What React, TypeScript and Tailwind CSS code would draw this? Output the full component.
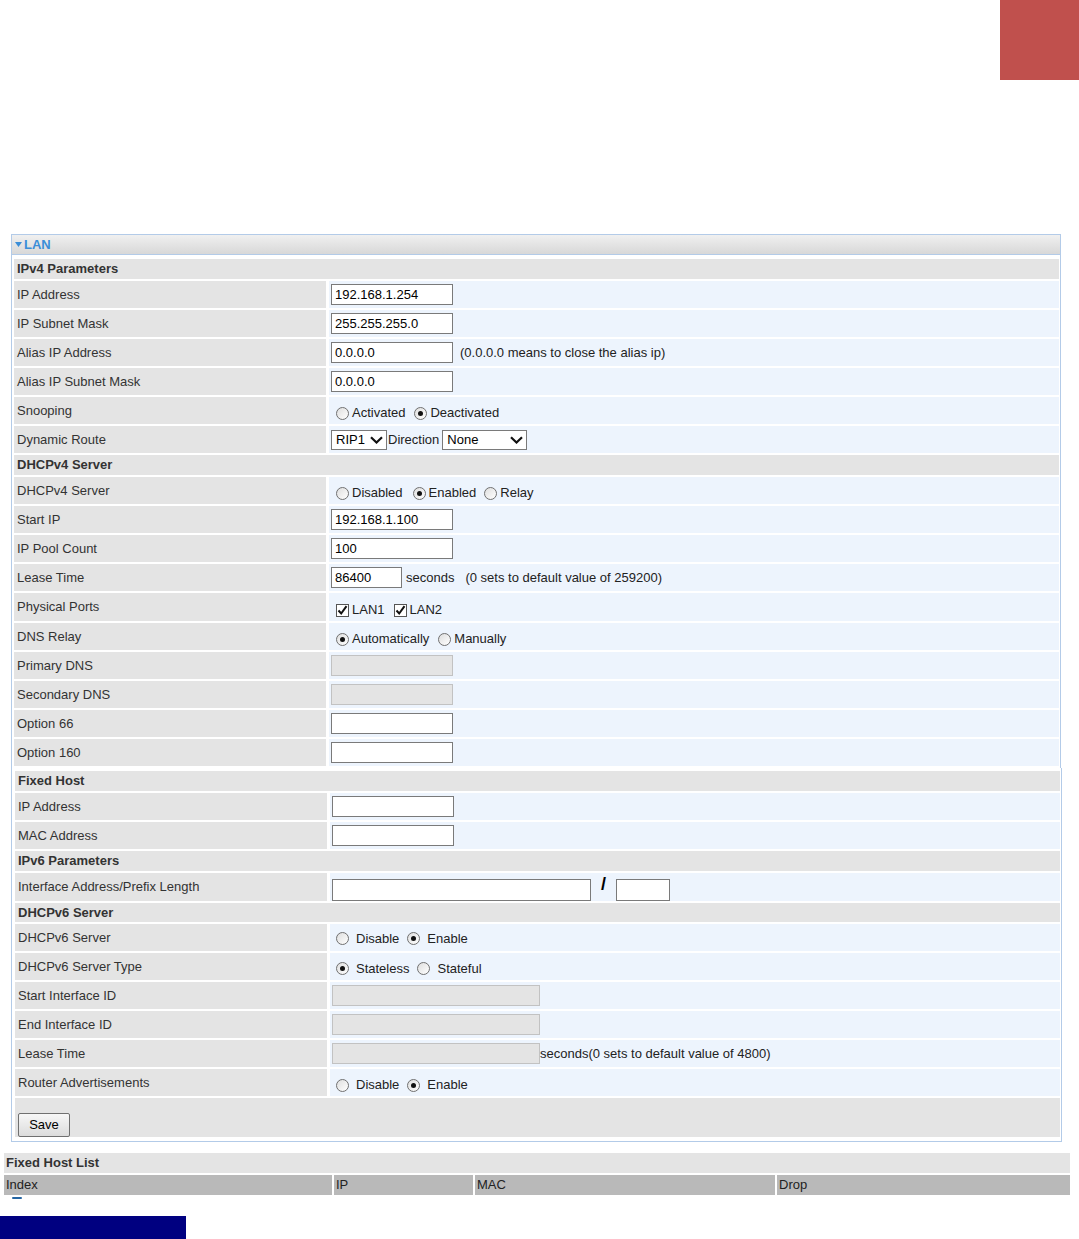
import type { ReactNode } from "react";

const border = "border-[#b3cbe8]";

function Radio({ checked }: { checked?: boolean }) {
  return (
    <span className="inline-flex h-[13px] w-[13px] shrink-0 items-center justify-center rounded-full border border-[#707070] bg-linear-to-br from-[#dedede] to-white">
      {checked && <span className="h-[5px] w-[5px] rounded-full bg-[#111]" />}
    </span>
  );
}

function Option({
  checked,
  label,
  className,
  gap = "ml-[3px]",
}: {
  checked?: boolean;
  label: string;
  className: string;
  gap?: string;
}) {
  return (
    <span className={"inline-flex items-center " + className}>
      <Radio checked={checked} />
      <span className={gap}>{label}</span>
    </span>
  );
}

function Check({ label, className }: { label: string; className: string }) {
  return (
    <span className={"inline-flex items-center " + className}>
      <svg width="13" height="13" viewBox="0 0 13 13" className="shrink-0">
        <rect x="0.5" y="0.5" width="12" height="12" fill="#fff" stroke="#555" />
        <path d="M2.5 6.5 L5.2 9.5 L10.5 2.2" fill="none" stroke="#111" strokeWidth="2" />
      </svg>
      <span className="ml-[3px]">{label}</span>
    </span>
  );
}

function Field({
  value = "",
  className = "w-[122px] h-[21px]",
  disabled,
}: {
  value?: string;
  className?: string;
  disabled?: boolean;
}) {
  return (
    <input
      type="text"
      readOnly
      disabled={disabled}
      defaultValue={value}
      className={
        className +
        " border px-[3px] text-[13px] text-black outline-none " +
        (disabled ? "border-[#c2c2c2] bg-[#e4e4e4]" : "border-[#7a7a7a] bg-white")
      }
    />
  );
}

function Select({ value, className }: { value: string; className: string }) {
  return (
    <span
      className={
        "flex h-[20px] items-center justify-between border border-[#7a7a7a] bg-white pl-[4px] pr-[3px] text-black " +
        className
      }
    >
      {value}
      <svg width="13" height="8" viewBox="0 0 13 8">
        <path d="M1 1.2 L6.5 6.5 L12 1.2" fill="none" stroke="#111" strokeWidth="2.2" />
      </svg>
    </span>
  );
}

function Header({ children, h = "h-[20px]" }: { children: ReactNode; h?: string }) {
  return (
    <div className={"col-span-2 flex items-center bg-[#e4e4e4] pl-[3px] font-bold text-[#333] " + h}>
      {children}
    </div>
  );
}

function Row({
  label,
  children,
  h = "h-[27px]",
  align = "items-center",
}: {
  label: string;
  children?: ReactNode;
  h?: string;
  align?: string;
}) {
  return (
    <>
      <div className={"flex items-center bg-[#e4e4e4] pl-[3px] text-[#333] " + h}>{label}</div>
      <div className={"flex bg-[#edf4fd] pl-[2px] text-[#222] " + align + " " + h}>{children}</div>
    </>
  );
}

export default function App() {
  return (
    <div className="h-[1239px] overflow-hidden bg-white font-['Liberation_Sans',Arial,sans-serif] text-[13px]">
      <div className="flex h-[234px] justify-end">
        <div className="h-[80px] w-[79px] bg-[#c0504d]" />
      </div>

      <div className={"ml-[11px] w-[1051px] border-b border-l " + border}>
        <div
          className={
            "flex h-[21px] w-[1049px] items-center border-t border-r border-b bg-linear-to-b from-[#f0f0f0] to-[#d8d8d8] pl-[3px] " +
            border
          }
        >
          <svg width="7" height="5" viewBox="0 0 7 5">
            <path d="M0 0 H7 L3.5 5 Z" fill="#3b8ed8" />
          </svg>
          <span className="ml-[2px] font-bold text-[#3b8ed8]">LAN</span>
        </div>

        <div className={"w-[1049px] border-r pt-[4px] pb-[2px] pl-[2px] " + border}>
          <div className="grid grid-cols-[312px_730px] gap-x-[3px] gap-y-[2px]">
            <Header>IPv4 Parameters</Header>
            <Row label="IP Address">
              <Field value="192.168.1.254" />
            </Row>
            <Row label="IP Subnet Mask">
              <Field value="255.255.255.0" />
            </Row>
            <Row label="Alias IP Address">
              <Field value="0.0.0.0" />
              <span className="ml-[7px]">(0.0.0.0 means to close the alias ip)</span>
            </Row>
            <Row label="Alias IP Subnet Mask">
              <Field value="0.0.0.0" />
            </Row>
            <Row label="Snooping" align="items-center pt-[5px]">
              <Option label="Activated" className="ml-[5px]" />
              <Option label="Deactivated" checked className="ml-[9px]" />
            </Row>
            <Row label="Dynamic Route">
              <Select value="RIP1" className="w-[56px]" />
              <span className="ml-[1px]">Direction</span>
              <Select value="None" className="ml-[3px] w-[85px]" />
            </Row>
            <Header>DHCPv4 Server</Header>
            <Row label="DHCPv4 Server" align="items-center pt-[5px]">
              <Option label="Disabled" className="ml-[5px]" />
              <Option label="Enabled" checked className="ml-[10px]" />
              <Option label="Relay" className="ml-[8px]" />
            </Row>
            <Row label="Start IP">
              <Field value="192.168.1.100" />
            </Row>
            <Row label="IP Pool Count">
              <Field value="100" />
            </Row>
            <Row label="Lease Time">
              <Field value="86400" className="h-[21px] w-[71px]" />
              <span className="ml-[4px]">seconds</span>
              <span className="ml-[11px]">(0 sets to default value of 259200)</span>
            </Row>
            <Row label="Physical Ports" h="h-[28px]" align="items-center pt-[6px]">
              <Check label="LAN1" className="ml-[5px]" />
              <Check label="LAN2" className="ml-[9px]" />
            </Row>
            <Row label="DNS Relay" align="items-center pt-[5px]">
              <Option label="Automatically" checked className="ml-[5px]" />
              <Option label="Manually" className="ml-[9px]" />
            </Row>
            <Row label="Primary DNS">
              <Field disabled />
            </Row>
            <Row label="Secondary DNS">
              <Field disabled />
            </Row>
            <Row label="Option 66">
              <Field />
            </Row>
            <Row label="Option 160">
              <Field />
            </Row>
          </div>
        </div>

        <div className={"w-[1050px] border-r pt-[3px] pb-[4px] pl-[3px] " + border}>
          <div className="grid grid-cols-[312px_730px] gap-x-[3px] gap-y-[2px]">
            <Header>Fixed Host</Header>
            <Row label="IP Address">
              <Field />
            </Row>
            <Row label="MAC Address">
              <Field />
            </Row>
            <Header>IPv6 Parameters</Header>
            <Row label="Interface Address/Prefix Length" h="h-[28px]" align="items-end">
              <Field className="h-[22px] w-[259px]" />
              <span className="mx-[10px] mb-[6px] self-center text-[18px] leading-none font-bold text-black">/</span>
              <Field className="h-[22px] w-[54px]" />
            </Row>
            <Header h="h-[19px]">DHCPv6 Server</Header>
            <Row label="DHCPv6 Server" align="items-center pt-[2px]">
              <Option label="Disable" className="ml-[4px]" gap="ml-[7px]" />
              <Option label="Enable" checked className="ml-[8px]" gap="ml-[7px]" />
            </Row>
            <Row label="DHCPv6 Server Type" align="items-center pt-[4px]">
              <Option label="Stateless" checked className="ml-[4px]" gap="ml-[7px]" />
              <Option label="Stateful" className="ml-[8px]" gap="ml-[7px]" />
            </Row>
            <Row label="Start Interface ID">
              <Field disabled className="h-[21px] w-[208px]" />
            </Row>
            <Row label="End Interface ID">
              <Field disabled className="h-[21px] w-[208px]" />
            </Row>
            <Row label="Lease Time">
              <Field disabled className="h-[21px] w-[208px]" />
              <span>seconds(0 sets to default value of 4800)</span>
            </Row>
            <Row label="Router Advertisements" align="items-center pt-[5px]">
              <Option label="Disable" className="ml-[4px]" gap="ml-[7px]" />
              <Option label="Enable" checked className="ml-[8px]" gap="ml-[7px]" />
            </Row>
            <div className="col-span-2 flex h-[39px] items-end bg-[#e4e4e4] pl-[3px]">
              <button className="h-[24px] w-[52px] rounded-[2px] border border-[#707070] bg-linear-to-b from-[#f7f7f7] to-[#dcdcdc] text-[13px] text-black">
                Save
              </button>
            </div>
          </div>
        </div>
      </div>

      <div className="mt-[11px] ml-[4px] w-[1066px]">
        <div className="flex h-[20px] items-center bg-[#e4e4e4] pl-[2px] font-bold text-[#333]">
          Fixed Host List
        </div>
        <div className="mt-[2px] grid grid-cols-[328px_139px_300px_1fr] gap-x-[2px]">
          {["Index", "IP", "MAC", "Drop"].map((col) => (
            <div key={col} className="flex h-[20px] items-center bg-[#b9b9b9] pl-[2px] text-[#222]">
              {col}
            </div>
          ))}
        </div>
      </div>
      <div className="mt-[2px] ml-[12px] h-[2px] w-[10px] rounded-full bg-[#2565a3]" />
      <div className="mt-[17px] h-[24px] w-[186px] bg-[#000080]" />
    </div>
  );
}
